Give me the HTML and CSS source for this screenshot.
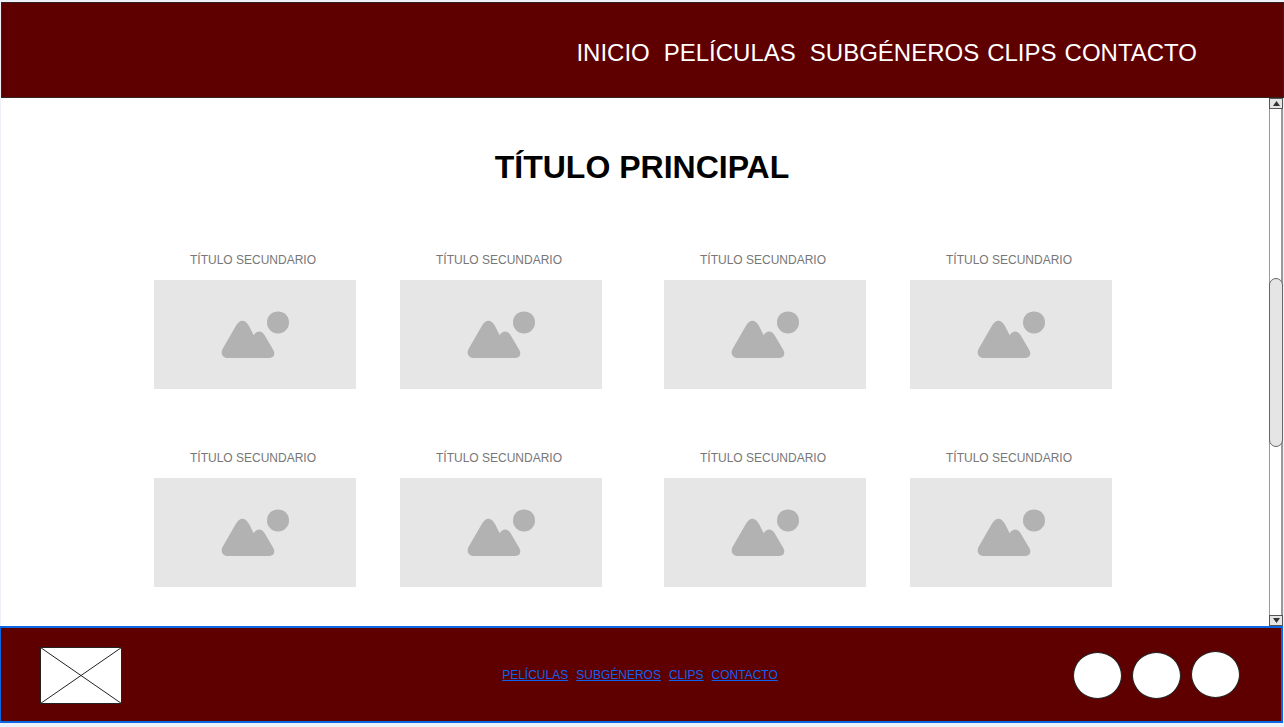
FILE: index.html
```
<!DOCTYPE html>
<html lang="es">
<head>
<meta charset="utf-8">
<meta name="viewport" content="width=device-width, initial-scale=1">
<title>Título principal</title>
<link rel="stylesheet" href="styles.css">
</head>
<body class="page">
<svg class="defs" aria-hidden="true">
  <symbol id="picture" viewBox="0 0 202 109">
    <circle cx="124" cy="42.4" r="11"/>
    <path d="M74.5 78C68.5 78 66 73.5 68.8 68.5L81.5 46.5C85.5 39 91 39 95 46L99.7 55.2C102.5 50.5 107.5 50.3 110.5 55L119.3 70C121.8 74.5 119.5 78 115.5 78Z"/>
  </symbol>
</svg>
<header class="header">
  <nav class="menu" aria-label="Principal">
    <a class="menu-link menu-link-wide" href="#inicio">INICIO</a>
    <a class="menu-link menu-link-wide" href="#peliculas">PELÍCULAS</a>
    <a class="menu-link" href="#subgeneros">SUBGÉNEROS</a>
    <a class="menu-link" href="#clips">CLIPS</a>
    <a class="menu-link" href="#contacto">CONTACTO</a>
  </nav>
</header>
<main class="main">
  <h1 class="title">TÍTULO PRINCIPAL</h1>
  <div class="catalog">
    <div class="group">
      <article class="card"><h2 class="card-title">TÍTULO SECUNDARIO</h2><svg class="card-picture" viewBox="0 0 202 109"><use href="#picture"/></svg></article>
      <article class="card"><h2 class="card-title">TÍTULO SECUNDARIO</h2><svg class="card-picture" viewBox="0 0 202 109"><use href="#picture"/></svg></article>
      <article class="card"><h2 class="card-title">TÍTULO SECUNDARIO</h2><svg class="card-picture" viewBox="0 0 202 109"><use href="#picture"/></svg></article>
      <article class="card"><h2 class="card-title">TÍTULO SECUNDARIO</h2><svg class="card-picture" viewBox="0 0 202 109"><use href="#picture"/></svg></article>
    </div>
    <div class="group">
      <article class="card"><h2 class="card-title">TÍTULO SECUNDARIO</h2><svg class="card-picture" viewBox="0 0 202 109"><use href="#picture"/></svg></article>
      <article class="card"><h2 class="card-title">TÍTULO SECUNDARIO</h2><svg class="card-picture" viewBox="0 0 202 109"><use href="#picture"/></svg></article>
      <article class="card"><h2 class="card-title">TÍTULO SECUNDARIO</h2><svg class="card-picture" viewBox="0 0 202 109"><use href="#picture"/></svg></article>
      <article class="card"><h2 class="card-title">TÍTULO SECUNDARIO</h2><svg class="card-picture" viewBox="0 0 202 109"><use href="#picture"/></svg></article>
    </div>
  </div>
  <div class="scroll">
    <button class="scroll-button" type="button" aria-label="Subir"><svg class="scroll-arrow" viewBox="0 0 7 5"><path d="M3.5 0L7 5H0Z"/></svg></button>
    <div class="scroll-track"><div class="scroll-thumb"></div></div>
    <button class="scroll-button" type="button" aria-label="Bajar"><svg class="scroll-arrow" viewBox="0 0 7 5"><path d="M0 0H7L3.5 5Z"/></svg></button>
  </div>
</main>
<footer class="footer">
  <div class="footer-side">
    <svg class="logo" viewBox="0 0 82 57" role="img" aria-label="Logotipo"><path d="M.5.5H81.5V56.5H.5ZL81.5 56.5M81.5.5L.5 56.5"/></svg>
  </div>
  <nav class="links" aria-label="Pie de página">
    <a class="link" href="#peliculas">PELÍCULAS</a>
    <a class="link" href="#subgeneros">SUBGÉNEROS</a>
    <a class="link" href="#clips">CLIPS</a>
    <a class="link" href="#contacto">CONTACTO</a>
  </nav>
  <div class="footer-side social">
    <a class="social-link" href="#red-1" aria-label="Red social 1"></a>
    <a class="social-link" href="#red-2" aria-label="Red social 2"></a>
    <a class="social-link social-link-raised" href="#red-3" aria-label="Red social 3"></a>
  </div>
</footer>
</body>
</html>
```
FILE: styles.css
```
* {
  box-sizing: border-box;
}

.page {
  display: flex;
  flex-direction: column;
  min-height: 100vh;
  margin: 0;
  padding: 2px 0 4px;
  background: #eef1f8;
  font-family: "Liberation Sans", Arial, sans-serif;
}

.defs {
  position: absolute;
  width: 0;
  height: 0;
}

.header {
  display: flex;
  justify-content: flex-end;
  margin-left: 1px;
  padding: 36px 86px 31px 24px;
  border: 1px solid #332222;
  background: #5e0000;
}

.menu {
  display: flex;
  flex-wrap: wrap;
  gap: 8px;
}

.menu-link {
  color: #fff;
  font-size: 24px;
  line-height: 27px;
  text-decoration: none;
}

.menu-link-wide {
  margin-right: 6px;
}

.main {
  position: relative;
  flex: 1;
  margin-left: 1px;
  padding: 49px 0 39px;
  border-right: 1px solid #eef1f8;
  background: #fff;
}

.title {
  margin: 0;
  color: #000;
  font-size: 32px;
  line-height: 40px;
  text-align: center;
}

.catalog {
  display: flex;
  flex-wrap: wrap;
  justify-content: center;
  gap: 62px;
  padding: 64px 18px 0 0;
}

.group {
  display: grid;
  grid-template-columns: repeat(2, 202px);
  gap: 60px 44px;
}

.card {
  display: flex;
  flex-direction: column;
  gap: 11px;
}

.card-title {
  margin: 0;
  padding-right: 4px;
  color: #777;
  font-size: 12px;
  font-weight: 400;
  line-height: 18px;
  text-align: center;
}

.card-picture {
  display: block;
  width: 100%;
  background: #e6e6e6;
  fill: #b2b2b2;
}

.scroll {
  position: absolute;
  top: 0;
  right: 0;
  bottom: 0;
  display: flex;
  flex-direction: column;
  width: 14px;
}

.scroll-button {
  display: flex;
  align-items: center;
  justify-content: center;
  height: 11px;
  padding: 0;
  border: 1px solid #555;
  border-radius: 0;
  background: #e5e5e5;
}

.scroll-arrow {
  width: 7px;
  height: 5px;
  fill: #333;
}

.scroll-track {
  display: flex;
  flex: 1;
  flex-direction: column;
  justify-content: center;
  background: linear-gradient(to right, #999 1px, #fff 1px 12px, #999 12px);
}

.scroll-thumb {
  height: 33.4%;
  border: 1px solid #666;
  border-radius: 7px;
  background: #e5e5e5;
}

.footer {
  display: flex;
  align-items: center;
  justify-content: space-between;
  margin-right: 1px;
  padding: 19px 41px 17px 39px;
  border: 2px solid #0b66e4;
  border-left-width: 1px;
  background: #5e0000;
}

.footer-side {
  display: flex;
  flex: 1;
}

.logo {
  width: 82px;
  height: 57px;
  fill: #fff;
  stroke: #222;
}

.links {
  display: flex;
  flex-wrap: wrap;
  gap: 8px;
  padding-bottom: 2px;
}

.link {
  color: #1062f0;
  font-size: 12px;
  line-height: 16px;
}

.social {
  justify-content: flex-end;
  gap: 10px;
}

.social-link {
  width: 49px;
  height: 47px;
  border: 1px solid #222;
  border-radius: 50%;
  background: #fff;
}

.social-link-raised {
  margin: -1px 0 1px;
}
```
